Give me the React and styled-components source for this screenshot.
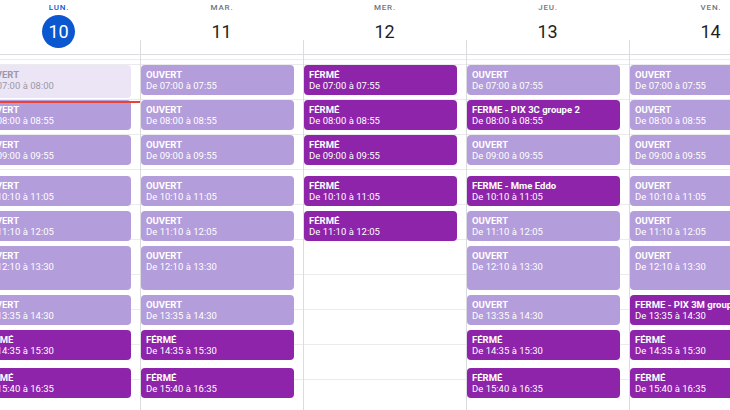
import React from "react";
import styled, { createGlobalStyle } from "styled-components";

const HOUR = 35;
const OFFSET = 10;
const START = 7;

const GlobalStyle = createGlobalStyle`
  html, body { margin: 0; padding: 0; background: #fff; }
  body { font-family: Roboto, "Noto Sans", Arial, sans-serif; }
  * { box-sizing: border-box; }
`;

const Viewport = styled.div`
  width: 730px;
  height: 410px;
  overflow: hidden;
  background: #fff;
`;

const Week = styled.div`
  display: flex;
  flex-direction: column;
  width: ${5 * 163}px;
  margin-left: -23px;
`;

const HeaderRow = styled.div`
  display: grid;
  grid-template-columns: repeat(5, 163px);
  height: 55px;
  border-bottom: 1px solid #dadce0;
`;

const HeaderCell = styled.div`
  position: relative;
  display: flex;
  flex-direction: column;
  align-items: center;
  padding-top: 2px;
  &::after {
    content: "";
    position: absolute;
    left: 0;
    bottom: 0;
    height: 14px;
    border-left: 1px solid #dadce0;
  }
`;

const DayLabel = styled.div`
  font-size: 8px;
  line-height: 11px;
  font-weight: 500;
  letter-spacing: 0.8px;
  text-transform: uppercase;
  color: ${(p) => (p.$today ? "#0b57d0" : "#71767a")};
  padding-left: 1px;
`;

const DayNumber = styled.div`
  margin-top: 2px;
  width: 33px;
  height: 33px;
  border-radius: 50%;
  display: flex;
  align-items: center;
  justify-content: center;
  font-size: 18px;
  font-weight: 400;
  background: ${(p) => (p.$today ? "#0b57d0" : "transparent")};
  color: ${(p) => (p.$today ? "#fff" : "#1f1f1f")};
`;

const Body = styled.div`
  display: grid;
  grid-template-columns: repeat(5, 163px);
  height: 355px;
  background-image: repeating-linear-gradient(
    to bottom,
    #ebebed 0px,
    #ebebed 1px,
    transparent 1px,
    transparent ${HOUR}px
  );
  background-position: 0 ${OFFSET - 1}px;
`;

const DayColumn = styled.div`
  position: relative;
  border-left: 1px solid #dadce0;
`;

const palette = {
  open: { bg: "#b39ddb", fg: "#ffffff" },
  closed: { bg: "#8e24aa", fg: "#ffffff" },
  past: { bg: "#ebe5f6", fg: "#9d99a6" },
};

const Event = styled.div`
  position: absolute;
  left: 0;
  right: 9px;
  border-radius: 4px;
  padding: 4px 5px;
  overflow: hidden;
  background: ${(p) => palette[p.$kind].bg};
  color: ${(p) => palette[p.$kind].fg};
`;

const EventTitle = styled.div`
  font-size: 9.5px;
  line-height: 11px;
  font-weight: 700;
  white-space: nowrap;
`;

const EventTime = styled.div`
  font-size: 9.5px;
  line-height: 11px;
  font-weight: 400;
  white-space: nowrap;
`;

const NowLine = styled.div`
  position: absolute;
  left: 0;
  right: 0;
  height: 2px;
  background: #ea4335;
  z-index: 2;
  &::before {
    content: "";
    position: absolute;
    left: -6px;
    top: -5px;
    width: 12px;
    height: 12px;
    border-radius: 50%;
    background: #ea4335;
  }
`;

const toMin = (t) => {
  const [h, m] = t.split(":").map(Number);
  return h * 60 + m;
};

const slots = [
  ["07:00", "07:55"],
  ["08:00", "08:55"],
  ["09:00", "09:55"],
  ["10:10", "11:05"],
  ["11:10", "12:05"],
  ["12:10", "13:30"],
  ["13:35", "14:30"],
  ["14:35", "15:30"],
  ["15:40", "16:35"],
];

const OPEN = "OUVERT";
const CLOSED = "FÉRMÉ";

const build = (titles, overrides = {}) =>
  titles.map((t, i) => {
    const o = overrides[i] || {};
    const closed = t !== OPEN;
    return {
      title: t,
      start: o.start || slots[i][0],
      end: o.end || slots[i][1],
      kind: o.kind || (closed ? "closed" : "open"),
    };
  });

const days = [
  {
    label: "Lun.",
    num: 10,
    today: true,
    now: "08:04",
    events: build(
      [OPEN, OPEN, OPEN, OPEN, OPEN, OPEN, OPEN, CLOSED, CLOSED],
      { 0: { end: "08:00", kind: "past" } }
    ),
  },
  {
    label: "Mar.",
    num: 11,
    events: build([OPEN, OPEN, OPEN, OPEN, OPEN, OPEN, OPEN, CLOSED, CLOSED]),
  },
  {
    label: "Mer.",
    num: 12,
    events: build([CLOSED, CLOSED, CLOSED, CLOSED, CLOSED]),
  },
  {
    label: "Jeu.",
    num: 13,
    events: build([
      OPEN,
      "FERME - PIX 3C groupe 2",
      OPEN,
      "FERME - Mme Eddo",
      OPEN,
      OPEN,
      OPEN,
      CLOSED,
      CLOSED,
    ]),
  },
  {
    label: "Ven.",
    num: 14,
    events: build([
      OPEN,
      OPEN,
      OPEN,
      OPEN,
      OPEN,
      OPEN,
      "FERME - PIX 3M groupe 2",
      CLOSED,
      CLOSED,
    ]),
  },
];

const yOf = (t) => OFFSET + ((toMin(t) - START * 60) / 60) * HOUR;

export default function App() {
  return (
    <>
      <GlobalStyle />
      <Viewport>
        <Week>
          <HeaderRow>
            {days.map((d) => (
              <HeaderCell key={d.num}>
                <DayLabel $today={d.today}>{d.label}</DayLabel>
                <DayNumber $today={d.today}>{d.num}</DayNumber>
              </HeaderCell>
            ))}
          </HeaderRow>
          <Body>
            {days.map((d) => (
              <DayColumn key={d.num}>
                {d.events.map((e, i) => {
                  const top = yOf(e.start);
                  const height = yOf(e.end) - top - 2;
                  return (
                    <Event key={i} $kind={e.kind} style={{ top, height }}>
                      <EventTitle>{e.title}</EventTitle>
                      <EventTime>
                        De {e.start} à {e.end}
                      </EventTime>
                    </Event>
                  );
                })}
                {d.now && <NowLine style={{ top: yOf(d.now) - 1 }} />}
              </DayColumn>
            ))}
          </Body>
        </Week>
      </Viewport>
    </>
  );
}
